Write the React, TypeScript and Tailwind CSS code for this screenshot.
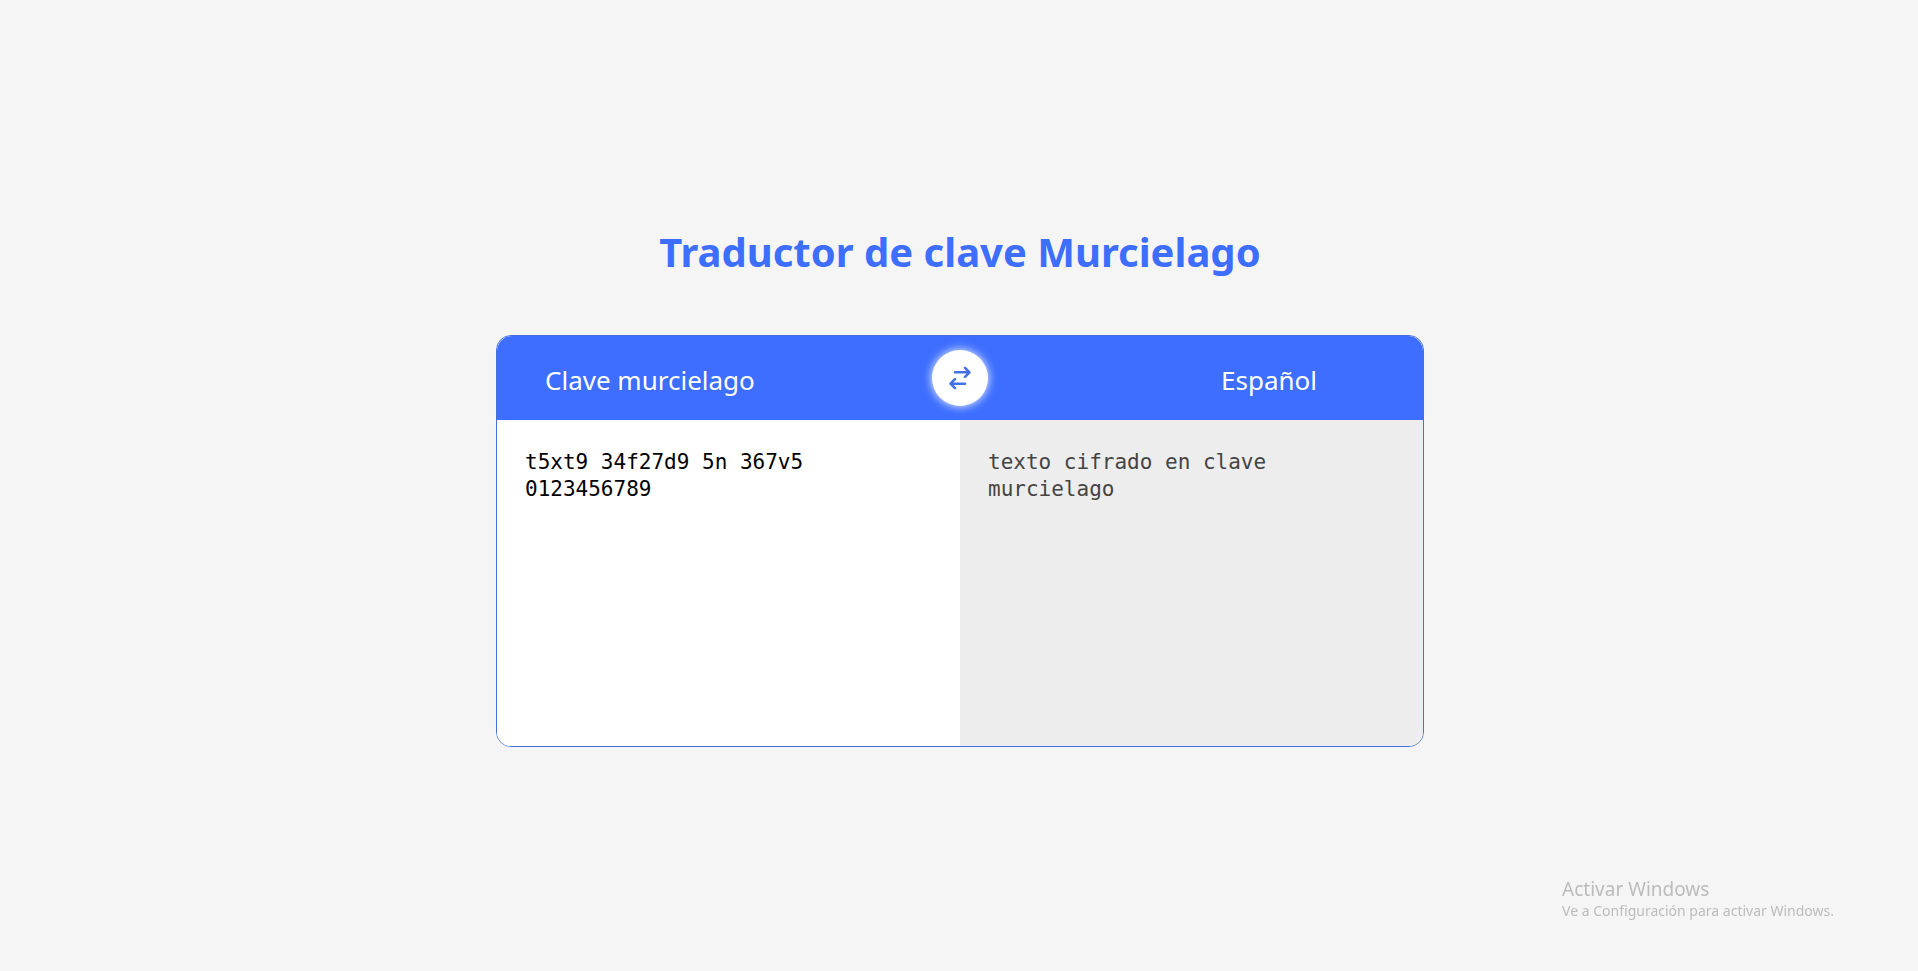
import { useState } from 'react';

const KEY = 'murcielago';

function decode(text: string): string {
  return text.replace(/\d/g, (d) => KEY[Number(d)]);
}

function encode(text: string): string {
  return text.replace(/[a-z]/gi, (c) => {
    const i = KEY.indexOf(c.toLowerCase());
    return i < 0 ? c : String(i);
  });
}

function SwapIcon() {
  return (
    <svg
      viewBox="0 0 24 26"
      className="h-[26px] w-6"
      fill="none"
      stroke="currentColor"
      strokeWidth="2.6"
      strokeLinecap="round"
      strokeLinejoin="round"
      aria-hidden="true"
    >
      <path d="M7 7.3H21M17 2.8L21.5 7.3L17 11.8" />
      <path d="M17 18.7H3M7 14.2L2.5 18.7L7 23.2" />
    </svg>
  );
}

export default function App() {
  const [decoding, setDecoding] = useState(true);
  const [source, setSource] = useState('t5xt9 34f27d9 5n 367v5 0123456789');
  const result = decoding ? decode(source) : encode(source);

  const swap = () => {
    setSource(result);
    setDecoding(!decoding);
  };

  return (
    <div className="flex min-h-screen flex-col items-center justify-center bg-[#f5f5f5] pr-4 pb-px pl-[18px] font-['Noto_Sans',sans-serif]">
      <main className="flex w-full max-w-[928px] flex-col items-center gap-[55px]">
        <h1 className="pt-px text-center text-[40px] leading-[56px] font-bold text-[#3d6eff]">
          Traductor de clave Murcielago
        </h1>
        <section className="w-full overflow-hidden rounded-[15px] border border-[#4570d8] bg-white">
          <header className="grid h-[84px] grid-cols-[1fr_56px_1fr] items-center rounded-t-[15px] bg-[#3d6eff] text-[26px] text-white">
            <label htmlFor="source" className="pt-1 pl-12">
              {decoding ? 'Clave murcielago' : 'Español'}
            </label>
            <button
              type="button"
              aria-label="Intercambiar"
              onClick={swap}
              className="flex size-14 items-center justify-center rounded-full bg-white text-[#4570e6] shadow-[0_0_10px_#ffffff]"
            >
              <SwapIcon />
            </button>
            <label htmlFor="result" className="pt-1 pr-[106px] text-right">
              {decoding ? 'Español' : 'Clave murcielago'}
            </label>
          </header>
          <div className="grid grid-cols-2 font-['DejaVu_Sans_Mono',monospace] text-[21px] leading-[27px]">
            <textarea
              id="source"
              spellCheck={false}
              value={source}
              onChange={(e) => setSource(e.target.value)}
              className="block h-[326px] w-full resize-none bg-white px-7 pt-[29px] pb-7 text-black outline-none"
            />
            <textarea
              id="result"
              readOnly
              spellCheck={false}
              value={result}
              className="block h-[326px] w-full resize-none bg-[#ededed] px-7 pt-[29px] pb-7 text-[#444444] outline-none"
            />
          </div>
        </section>
      </main>
      <aside className="fixed right-[84px] bottom-[50px] text-[#bcbcbc]">
        <p className="text-[19px] leading-6">Activar Windows</p>
        <p className="text-[14px] leading-5">Ve a Configuración para activar Windows.</p>
      </aside>
    </div>
  );
}
